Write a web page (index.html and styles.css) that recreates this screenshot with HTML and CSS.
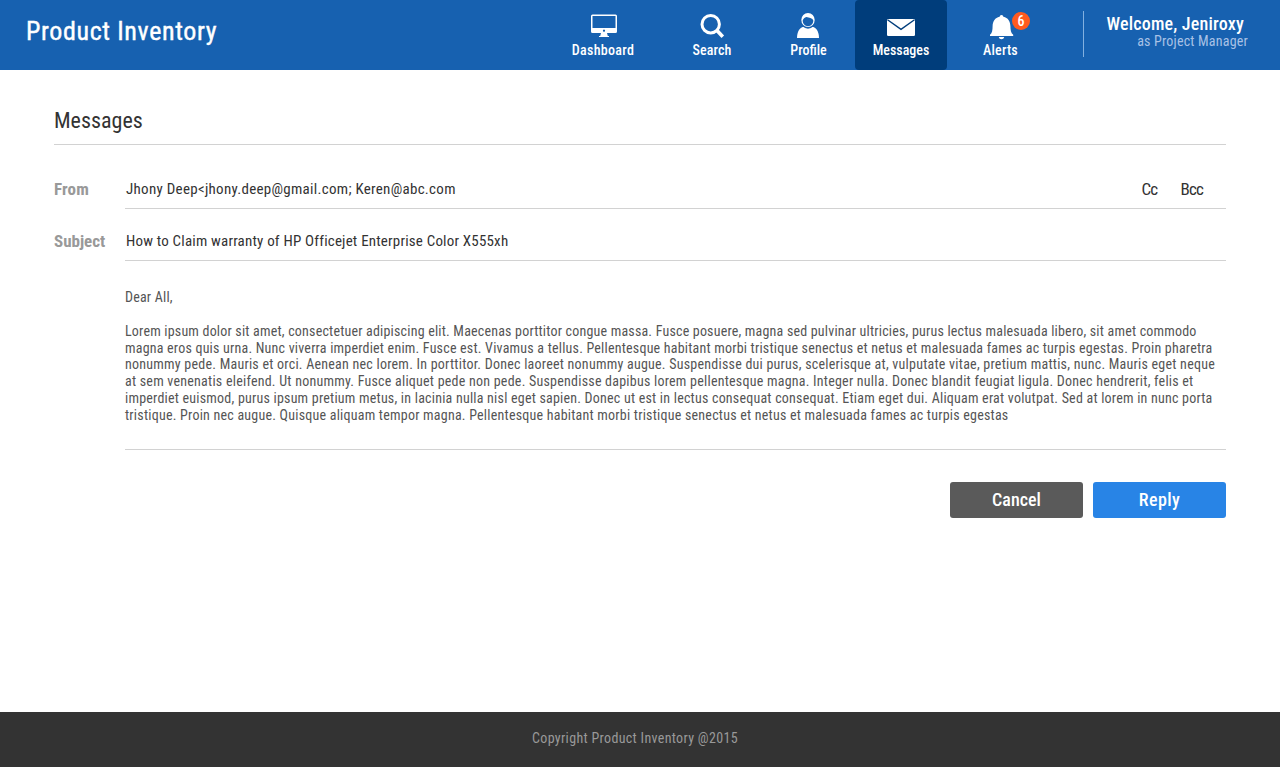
FILE: index.html
```html
<!DOCTYPE html>
<html lang="en">
<head>
<meta charset="utf-8">
<title>Product Inventory</title>
<link rel="stylesheet" href="styles.css">
</head>
<body>
<header class="topbar">
  <h1 class="brand">Product Inventory</h1>
  <nav class="nav">
    <a class="nav-item nav-dashboard">
      <svg class="icon" width="28" height="26" viewBox="0 0 28 26"><path fill="#fff" fill-rule="evenodd" d="M2.500 1.500h23A1.500 1.500 0 0 1 27 3v15.500a1.500 1.500 0 0 1-1.500 1.500H17l.8 3h1.200v1h-10v-1h1.200l.8-3H2.500A1.500 1.500 0 0 1 1 18.500V3a1.500 1.500 0 0 1 1.500-1.500zM2.500 3v12h23V3zM14 16.500a1.100 1.100 0 1 0 .01 0z"/></svg>
      Dashboard
    </a>
    <a class="nav-item nav-search">
      <svg class="icon" width="28" height="26" viewBox="0 0 28 26"><circle cx="12.700" cy="11.200" r="8.700" fill="none" stroke="#fff" stroke-width="3"/><path d="M18.500 17l6.300 6.800" stroke="#fff" stroke-width="3.600"/></svg>
      Search
    </a>
    <a class="nav-item nav-profile">
      <svg class="icon" width="28" height="26" viewBox="0 0 28 26"><path fill="#fff" d="M3 25c0-6.500 3-11.500 8-11.500h6c5 0 8 5 8 11.500z"/><ellipse cx="14" cy="7.500" rx="7.700" ry="8.200" fill="#1761b0"/><ellipse cx="14" cy="7" rx="6.700" ry="7" fill="#fff"/><path fill="#1761b0" d="M8.700 7.500c.6-1.700 1.800-3.300 3.800-3.500 2.600 1 5.600.6 6.800 3.500 0 3.300-2.300 5.700-5.300 5.700s-5.300-2.400-5.300-5.700z"/></svg>
      Profile
    </a>
    <a class="nav-item nav-messages">
      <svg class="icon" width="28" height="26" viewBox="0 0 28 26"><rect y="6" width="28" height="17" rx="1.200" fill="#fff"/><path d="M.5 6.700L14 16.300 27.500 6.700" fill="none" stroke="#003d7b" stroke-width="1.400"/></svg>
      Messages
    </a>
    <a class="nav-item nav-alerts">
      <svg class="icon" width="28" height="26" viewBox="0 0 28 26"><path fill="#fff" d="M14.500 2a1.900 1.900 0 0 1 1.900 1.700c4.600 1 6.800 4.500 7 9.300.1 4 .4 6.900 2.800 8.700V23H3v-1.300c2.300-1.800 2.500-4.700 2.600-8.700.2-4.800 2.400-8.300 7-9.300A1.900 1.900 0 0 1 14.500 2zM11.800 24h5.400c-.4 1.600-1.300 2.200-2.700 2.200s-2.300-.6-2.700-2.200z"/></svg>
      Alerts
      <b class="badge">6</b>
    </a>
  </nav>
  <div class="user">
    <div class="user-name">Welcome, Jeniroxy</div>
    <div class="user-role">as Project Manager</div>
  </div>
</header>
<main class="content">
  <h2 class="page-title">Messages</h2>
  <div class="field">
    <div class="label label-from">From</div>
    <div class="value from">Jhony Deep&lt;jhony.deep@gmail.com; Keren@abc.com<span class="copies"><a>Cc</a><a>Bcc</a></span></div>
  </div>
  <div class="field">
    <div class="label">Subject</div>
    <div class="value">How to Claim warranty of HP Officejet Enterprise Color X555xh</div>
  </div>
  <div class="message">
    <p>Dear All,</p>
    <p class="text">
      <span class="l1">Lorem ipsum dolor sit amet, consectetuer adipiscing elit. Maecenas porttitor congue massa. Fusce posuere, magna sed pulvinar ultricies, purus lectus malesuada libero, sit amet commodo</span><br>
      <span class="l2">magna eros quis urna. Nunc viverra imperdiet enim. Fusce est. Vivamus a tellus. Pellentesque habitant morbi tristique senectus et netus et malesuada fames ac turpis egestas. Proin pharetra</span><br>
      <span class="l3">nonummy pede. Mauris et orci. Aenean nec lorem. In porttitor. Donec laoreet nonummy augue. Suspendisse dui purus, scelerisque at, vulputate vitae, pretium mattis, nunc. Mauris eget neque</span><br>
      <span class="l4">at sem venenatis eleifend. Ut nonummy. Fusce aliquet pede non pede. Suspendisse dapibus lorem pellentesque magna. Integer nulla. Donec blandit feugiat ligula. Donec hendrerit, felis et</span><br>
      <span class="l5">imperdiet euismod, purus ipsum pretium metus, in lacinia nulla nisl eget sapien. Donec ut est in lectus consequat consequat. Etiam eget dui. Aliquam erat volutpat. Sed at lorem in nunc porta</span><br>
      <span class="l6">tristique. Proin nec augue. Quisque aliquam tempor magna. Pellentesque habitant morbi tristique senectus et netus et malesuada fames ac turpis egestas</span>
    </p>
  </div>
  <div class="actions"><button class="btn cancel">Cancel</button><button class="btn reply">Reply</button></div>
</main>
<footer class="footer">Copyright Product Inventory @2015</footer>
</body>
</html>
```

FILE: styles.css
```css
* { box-sizing: border-box; margin: 0; padding: 0; }
body {
  display: flex;
  flex-direction: column;
  height: 767px;
  background: #fff;
  color: #333;
  font-family: Roboto, "Open Sans", sans-serif;
  font-stretch: 75%;
  letter-spacing: 0.2px;
}

/* Top bar */
.topbar { display: flex; height: 70px; background: #1761b0; color: #fff; white-space: nowrap; }
.brand { flex: none; width: 543px; padding: 14px 0 0 26px; font-size: 26px; line-height: 34px; font-weight: 400; letter-spacing: 0.62px; -webkit-text-stroke: 0.4px #fff; }
.nav { display: flex; flex: none; }
.nav-item { position: relative; display: flex; flex-direction: column; align-items: center; padding-top: 13px; font-size: 14px; line-height: 16px; font-weight: 500; border-radius: 4px; }
.icon { display: block; margin-bottom: 3px; flex: none; overflow: visible; }
.nav-dashboard { width: 119px; padding-left: 1px; letter-spacing: 0.3px; }
.nav-dashboard .icon { margin-left: 2px; }
.nav-search { width: 100px; letter-spacing: 0.1px; }
.nav-profile { width: 93px; letter-spacing: 0; }
.nav-profile .icon { margin-right: 1px; }
.nav-messages { width: 92px; background: #003d7b; letter-spacing: 0; }
.nav-alerts { width: 107px; }
.nav-alerts .icon { margin-left: 1px; }
.badge { position: absolute; left: 65px; top: 12px; width: 18px; height: 18px; border-radius: 50%; background: #ff5a1f; text-align: center; line-height: 18px; font-size: 14px; font-weight: 500; }
.user { flex: none; width: 165px; height: 46px; margin: 11px 32px 0 29px; border-left: 1px solid #82b0e0; text-align: right; }
.user-name { padding: 3px 4px 0 0; font-size: 18px; line-height: 20px; font-weight: 500; }
.user-role { font-size: 14px; line-height: 15px; color: #a9c1e6; }

/* Message */
.content { flex: 1; padding: 0 54px; }
.page-title { height: 75px; padding-top: 37px; border-bottom: 1px solid #d2d2d2; font-size: 22px; line-height: 28px; font-weight: 400; letter-spacing: 0; }
.field { display: flex; height: 52px; }
.page-title + .field { height: 64px; padding-top: 12px; }
.label { width: 71px; padding-top: 22px; font-size: 17px; line-height: 20px; font-weight: 700; letter-spacing: 0; color: #999; }
.label-from { letter-spacing: 0.2px; }
.value { flex: 1; display: flex; justify-content: space-between; padding: 22px 23px 0 1px; border-bottom: 1px solid #d2d2d2; font-size: 15px; line-height: 20px; letter-spacing: 0.19px; }
.from { letter-spacing: 0.29px; }
.copies { display: flex; gap: 23px; font-size: 17px; letter-spacing: -0.8px; }
.message { height: 189px; margin-left: 71px; padding-top: 28px; border-bottom: 1px solid #d2d2d2; color: #555; font-size: 14px; line-height: 16.8px; white-space: nowrap; }
.text { margin-top: 17px; }
.l1 { letter-spacing: 0.195px; }
.l2 { letter-spacing: 0.206px; }
.l3 { letter-spacing: 0.235px; }
.l4 { letter-spacing: 0.23px; }
.l5 { letter-spacing: 0.214px; }
.l6 { letter-spacing: 0.223px; }
.actions { display: flex; justify-content: flex-end; gap: 10px; margin-top: 32px; }
.btn { width: 133px; height: 36px; border: 0; border-radius: 3px; color: #fff; font: 500 18px/36px Roboto, sans-serif; font-stretch: 75%; }
.cancel { background: #5a5a5a; }
.reply { background: #2884e6; letter-spacing: 0.4px; }

.footer { height: 55px; padding-right: 10px; background: #333; color: #999; text-align: center; font-size: 14px; line-height: 53px; letter-spacing: 0.33px; }
```
